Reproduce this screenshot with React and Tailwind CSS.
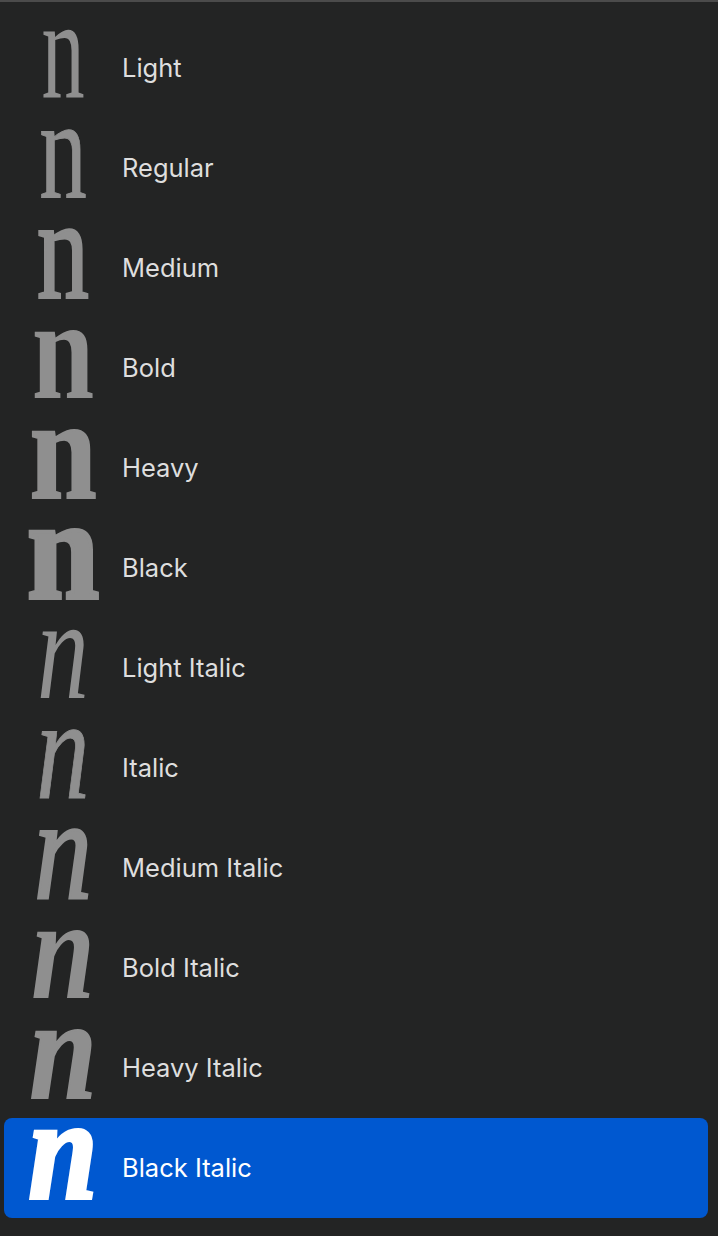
import React from "react";

const styles = [
  { name: "Light", glyph: "font-normal not-italic scale-x-[0.6]" },
  { name: "Regular", glyph: "font-normal not-italic scale-x-[0.66] [-webkit-text-stroke:1px_#8f8f8f]" },
  { name: "Medium", glyph: "font-normal not-italic scale-x-[0.72] [-webkit-text-stroke:3px_#8f8f8f]" },
  { name: "Bold", glyph: "font-bold not-italic scale-x-[0.78]" },
  { name: "Heavy", glyph: "font-bold not-italic scale-x-[0.84] [-webkit-text-stroke:2px_#8f8f8f]" },
  { name: "Black", glyph: "font-bold not-italic scale-x-[0.9] [-webkit-text-stroke:4px_#8f8f8f]" },
  { name: "Light Italic", glyph: "font-normal italic scale-x-[0.72]" },
  { name: "Italic", glyph: "font-normal italic scale-x-[0.74] [-webkit-text-stroke:1px_#8f8f8f]" },
  { name: "Medium Italic", glyph: "font-normal italic scale-x-[0.8] [-webkit-text-stroke:3px_#8f8f8f]" },
  { name: "Bold Italic", glyph: "font-bold italic scale-x-[0.8]" },
  { name: "Heavy Italic", glyph: "font-bold italic scale-x-[0.84] [-webkit-text-stroke:2px_#8f8f8f]" },
  { name: "Black Italic", glyph: "font-bold italic scale-x-[0.86] [-webkit-text-stroke:4px_#ffffff]", selected: true },
];

function StyleRow({ item }) {
  return (
    <div
      className={
        "ml-1 mr-[10px] flex h-[100px] items-center rounded-lg " +
        (item.selected ? "bg-[#0058d0] text-white" : "text-[#dedede]")
      }
    >
      <div className="flex w-[118px] shrink-0 justify-center pb-[37px]">
        <span
          className={
            "block h-[66px] font-['Liberation_Serif',serif] text-[144px] leading-[66px] " +
            (item.selected ? "text-white " : "text-[#8f8f8f] ") +
            item.glyph
          }
        >
          n
        </span>
      </div>
      <span className="font-['Inter',sans-serif] text-[25.5px] leading-none">{item.name}</span>
    </div>
  );
}

export default function App() {
  return (
    <div className="h-[1236px] w-[718px] overflow-hidden border-t-2 border-[#4b4b4b] bg-[#232424] pt-4">
      {styles.map((s) => (
        <StyleRow key={s.name} item={s} />
      ))}
    </div>
  );
}
